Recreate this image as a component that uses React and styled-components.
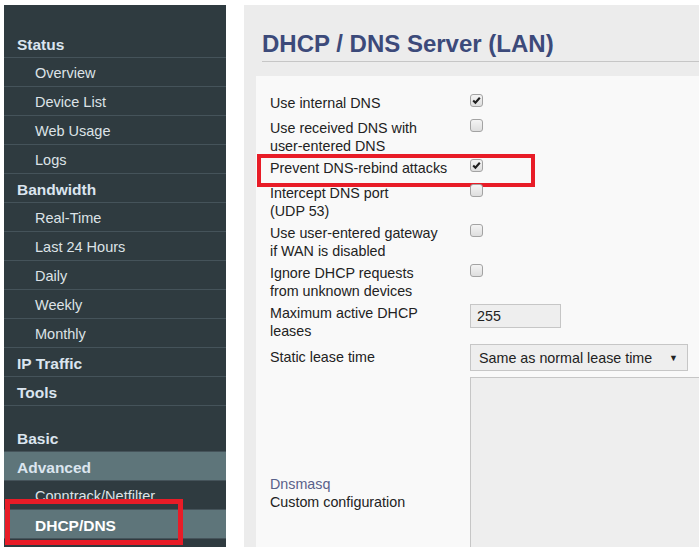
import React from "react"
import styled, { createGlobalStyle } from "styled-components"

const GlobalStyle = createGlobalStyle`
  html, body {
    margin: 0;
    height: 100%;
    overflow: hidden;
    background: #ffffff;
    font-family: "Liberation Sans", Arial, sans-serif;
  }
`

const nav = [
  { label: "Status", heading: true },
  { label: "Overview" },
  { label: "Device List" },
  { label: "Web Usage" },
  { label: "Logs" },
  { label: "Bandwidth", heading: true },
  { label: "Real-Time" },
  { label: "Last 24 Hours" },
  { label: "Daily" },
  { label: "Weekly" },
  { label: "Monthly" },
  { label: "IP Traffic", heading: true },
  { label: "Tools", heading: true },
  { spacer: true },
  { label: "Basic", heading: true },
  { label: "Advanced", heading: true, open: true },
  { label: "Conntrack/Netfilter" },
  { label: "DHCP/DNS", active: true, marked: true },
]

const fields = [
  { label: ["Use internal DNS"], type: "check", checked: true },
  { label: ["Use received DNS with", "user-entered DNS"], type: "check" },
  { label: ["Prevent DNS-rebind attacks"], type: "check", checked: true, marked: true },
  { label: ["Intercept DNS port", "(UDP 53)"], type: "check" },
  { label: ["Use user-entered gateway", "if WAN is disabled"], type: "check" },
  { label: ["Ignore DHCP requests", "from unknown devices"], type: "check" },
  { label: ["Maximum active DHCP", "leases"], type: "input", value: "255" },
  { label: ["Static lease time"], type: "select", value: "Same as normal lease time" },
]

const Checkbox = ({ checked }) => (
  <Box>
    {checked && (
      <svg width="11" height="11" viewBox="0 0 11 11">
        <path d="M2.2 5.6 L4.4 7.8 L8.8 2.8" fill="none" stroke="#1f1f1f" strokeWidth="2.1" />
      </svg>
    )}
  </Box>
)

const Control = ({ field }) => {
  if (field.type === "check") return <Checkbox checked={field.checked} />
  if (field.type === "input") return <Input>{field.value}</Input>
  return (
    <Select>
      <span>{field.value}</span>
      <Arrow>▼</Arrow>
    </Select>
  )
}

const App = () => {
  return (
    <>
      <GlobalStyle />
      <Page>
        <Sidebar>
          {nav.map((item, i) =>
            item.spacer ? (
              <Spacer key={i} />
            ) : (
              <NavItem key={i} heading={item.heading} open={item.open} active={item.active}>
                {item.label}
                {item.marked && <Mark left={1} top={-11} width={178} height={46} weight={5} />}
              </NavItem>
            )
          )}
        </Sidebar>
        <Main>
          <Title>DHCP / DNS Server (LAN)</Title>
          <Panel>
            {fields.map((field, i) => (
              <Row key={i}>
                <Label center={field.type === "select"}>
                  {field.label.map((line) => (
                    <div key={line}>{line}</div>
                  ))}
                </Label>
                <Control field={field} />
                {field.marked && <Mark left={-13} top={-2} width={278} height={33} weight={4} />}
              </Row>
            ))}
            <Row>
              <Label center>
                <LinkText>Dnsmasq</LinkText>
                <div>Custom configuration</div>
              </Label>
              <TextArea />
            </Row>
          </Panel>
        </Main>
      </Page>
    </>
  )
}

export default App

const Page = styled.div`
  display: flex;
  height: 547px;
  box-sizing: border-box;
  padding: 5px 0 0 4px;
`
const Sidebar = styled.nav`
  width: 222px;
  flex-shrink: 0;
  background: #2f3b40;
  padding-top: 24px;
`
const NavItem = styled.div`
  position: relative;
  height: 28px;
  line-height: 31px;
  border-bottom: 1px solid #45535a;
  padding-left: ${({ heading }) => (heading ? "13px" : "31px")};
  font-size: ${({ heading, active }) => (heading || active ? "15.5px" : "14.5px")};
  font-weight: ${({ heading, active }) => (heading || active ? "bold" : "normal")};
  color: ${({ heading, active }) => (active ? "#ffffff" : heading ? "#dbe5ef" : "#dde3e7")};
  background: ${({ open, active }) => (open || active ? "#5e757a" : "transparent")};
`
const Spacer = styled.div`
  height: 17px;
`
const Mark = styled.div`
  position: absolute;
  left: ${({ left }) => left}px;
  top: ${({ top }) => top}px;
  width: ${({ width }) => width}px;
  height: ${({ height }) => height}px;
  border: ${({ weight }) => weight}px solid #e81c27;
  box-sizing: border-box;
  pointer-events: none;
`
const Main = styled.main`
  flex: 1;
  margin-left: 18px;
  background: #ececec;
  overflow: hidden;
`
const Title = styled.h1`
  margin: 25px 0 14px 18px;
  padding-bottom: 3px;
  border-bottom: 1px solid #c6c6c6;
  font-size: 24px;
  line-height: 28px;
  font-weight: bold;
  color: #3c4a7a;
`
const Panel = styled.section`
  margin-left: 12px;
  background: #f9f9f9;
  padding: 15px 0 0 14px;
  height: 480px;
`
const Row = styled.div`
  position: relative;
  display: grid;
  grid-template-columns: 200px 1fr;
  align-items: start;
  min-height: 25px;
  box-sizing: border-box;
  padding: 2px 0;
`
const Label = styled.div`
  position: relative;
  top: ${({ center }) => (center ? "0" : "1px")};
  align-self: ${({ center }) => (center ? "center" : "start")};
  font-size: 14.3px;
  line-height: 18px;
  color: #222222;
`
const LinkText = styled.div`
  color: #59618a;
`
const Box = styled.span`
  display: flex;
  align-items: center;
  justify-content: center;
  width: 13px;
  height: 13px;
  margin-top: 1px;
  box-sizing: border-box;
  border: 1px solid #a3a3a3;
  border-radius: 3px;
  background: linear-gradient(#f4f4f4, #dedede);
`
const Input = styled.div`
  width: 91px;
  height: 24px;
  margin-top: 1px;
  box-sizing: border-box;
  border: 1px solid #c6c6c6;
  background: #eeeeee;
  padding-left: 6px;
  font-size: 14.3px;
  line-height: 22px;
  color: #222222;
`
const Select = styled.div`
  display: flex;
  justify-content: space-between;
  align-items: center;
  width: 218px;
  height: 27px;
  margin-top: 1px;
  box-sizing: border-box;
  border: 1px solid #c6c6c6;
  background: #eeeeee;
  padding: 0 9px 0 8px;
  font-size: 14.3px;
  color: #222222;
`
const Arrow = styled.span`
  font-size: 9px;
  color: #222222;
`
const TextArea = styled.div`
  width: 300px;
  height: 234px;
  margin-top: 2px;
  box-sizing: border-box;
  border: 1px solid #c6c6c6;
  background: #eeeeee;
`
